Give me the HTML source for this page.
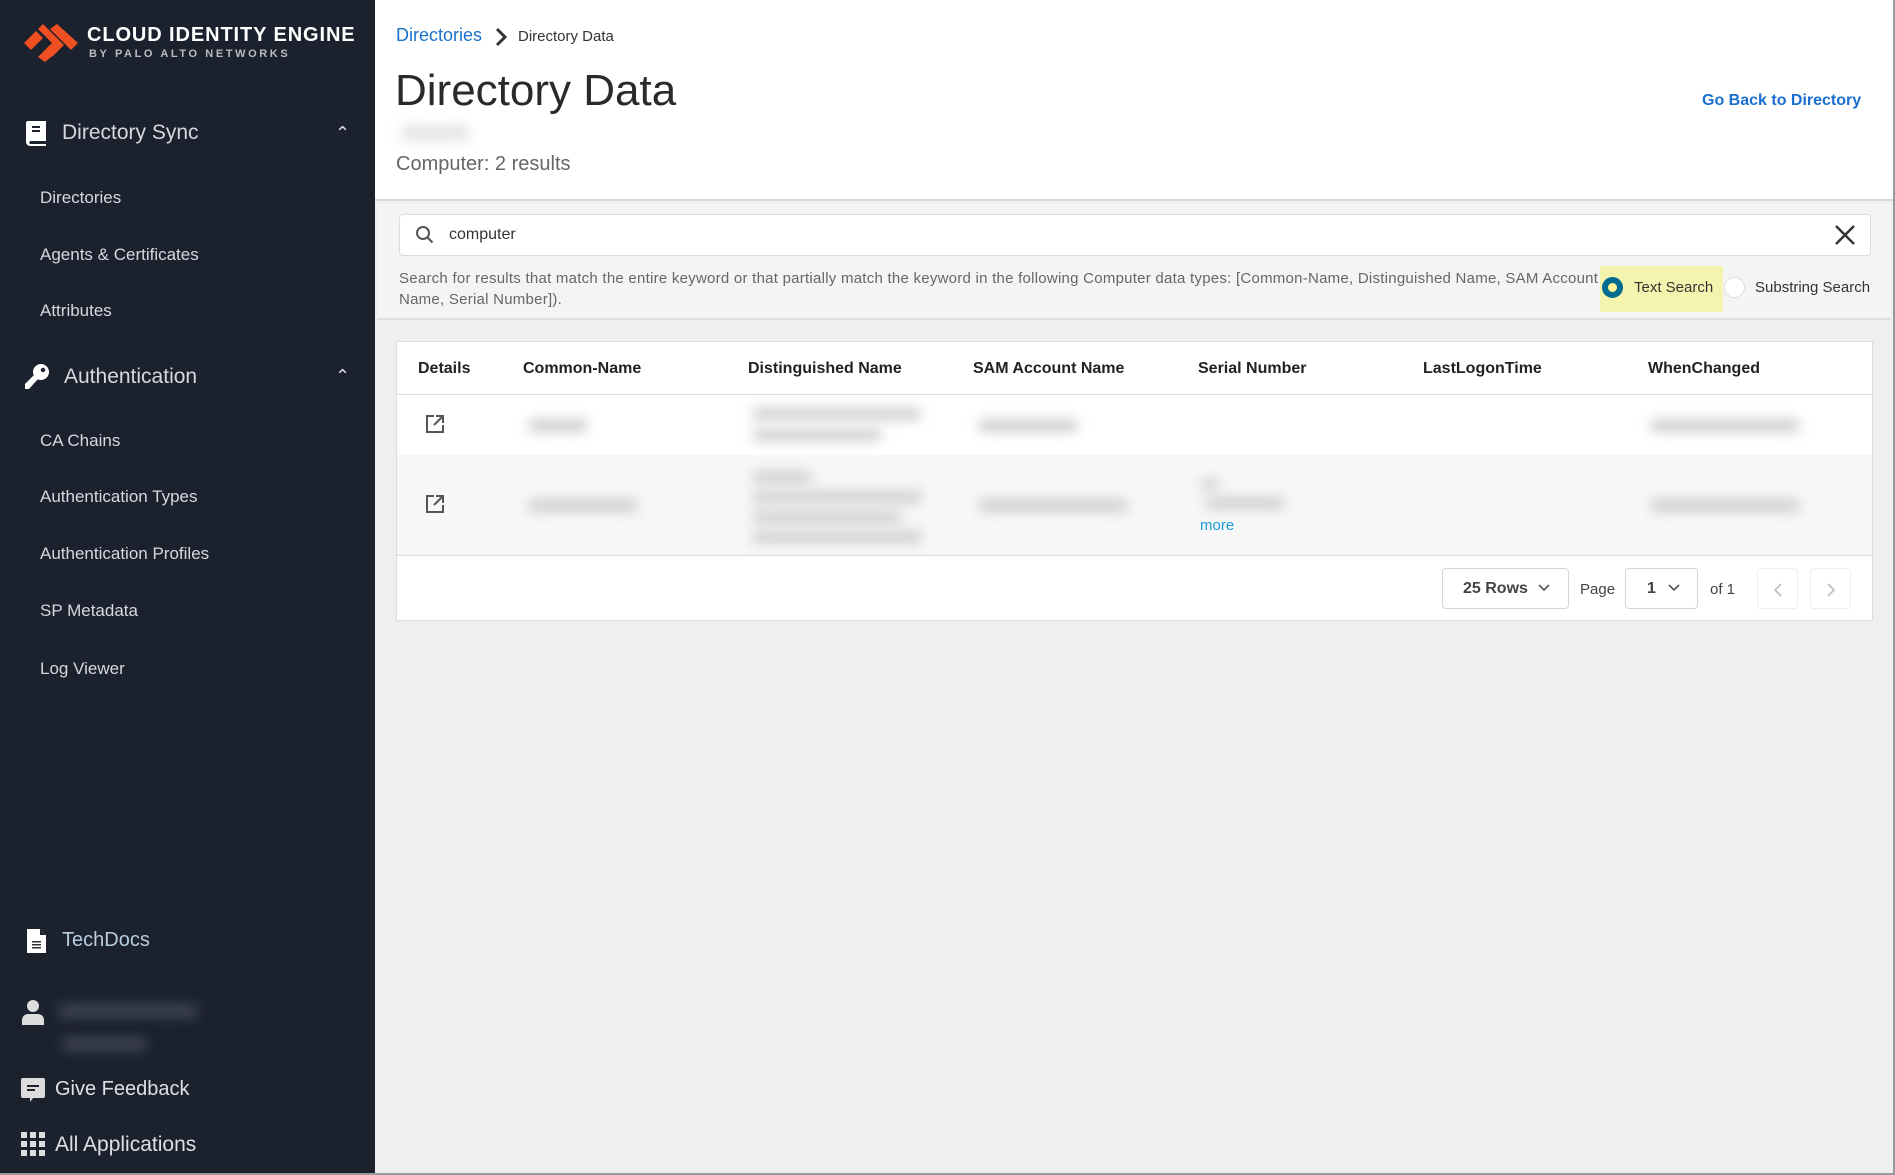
<!DOCTYPE html>
<html><head><meta charset="utf-8"><style>
*{margin:0;padding:0;box-sizing:border-box}
body{width:1895px;height:1175px;position:relative;overflow:hidden;font-family:"Liberation Sans",sans-serif;background:#efefef}
.a{position:absolute;white-space:nowrap}
#sb{position:absolute;left:0;top:0;width:375px;height:1175px;background:#1b212d;color:#d4d9e0}
.sub{font-size:17px;left:40px;color:#d4d9e0}
.sec{font-size:21px;color:#d4d9e0}
.hd{font-size:16px;font-weight:bold;color:#222}
.blur{position:absolute;background:#cfcfcf;filter:blur(6px);border-radius:6px}
.btn{position:absolute;border:1px solid #d5d5d5;border-radius:4px;background:#fff}
</style></head><body>
<div id="sb">
 <svg class="a" style="left:24px;top:24px" width="54" height="38" viewBox="0 0 54 38">
  <g fill="#f04e23"><polygon points="0,19 12,7 19,14 7,26"/><polygon points="14,5 19,0 40,21 28,33 21,26 28,19"/><polygon points="26,5 33,0 54,19 47,26"/><polygon points="14,33 26,21 33,28 21,38"/></g>
 </svg>
 <div class="a" style="left:87px;top:24px;font-size:20px;font-weight:bold;color:#fff;letter-spacing:0.9px">CLOUD IDENTITY ENGINE</div>
 <div class="a" style="left:89px;top:48px;font-size:11px;font-weight:bold;color:#b8bcc3;letter-spacing:2.6px">BY PALO ALTO NETWORKS</div>

 <svg class="a" style="left:26px;top:121px" width="22" height="25" viewBox="0 0 22 25"><path d="M2 0h18v20H4a2 2 0 0 0 0 3h16v2H4a4 4 0 0 1-4-4V2a2 2 0 0 1 2-2z" fill="#fff"/><rect x="6" y="5" width="8" height="2" fill="#1b212d"/><rect x="6" y="9" width="8" height="2" fill="#1b212d"/></svg>
 <div class="a sec" style="left:62px;top:121px">Directory Sync</div>
 <div class="a" style="left:335px;top:123px;font-size:18px;color:#d4d9e0">&#8963;</div>
 <div class="a sub" style="top:188px">Directories</div>
 <div class="a sub" style="top:245px">Agents &amp; Certificates</div>
 <div class="a sub" style="top:301px">Attributes</div>

 <svg class="a" style="left:25px;top:363px" width="25" height="26" viewBox="0 0 25 26"><circle cx="16" cy="9" r="8" fill="#fff"/><circle cx="18" cy="7" r="2.2" fill="#1b212d"/><polygon points="9,12 13,16 4,26 0,26 0,21" fill="#fff"/></svg>
 <div class="a sec" style="left:64px;top:365px">Authentication</div>
 <div class="a" style="left:335px;top:366px;font-size:18px;color:#d4d9e0">&#8963;</div>
 <div class="a sub" style="top:431px">CA Chains</div>
 <div class="a sub" style="top:487px">Authentication Types</div>
 <div class="a sub" style="top:544px">Authentication Profiles</div>
 <div class="a sub" style="top:601px">SP Metadata</div>
 <div class="a sub" style="top:659px">Log Viewer</div>

 <svg class="a" style="left:27px;top:929px" width="19" height="24" viewBox="0 0 19 24"><path d="M0 0h13l6 6v18H0z" fill="#fff"/><path d="M13 0v6h6" fill="#1b212d"/><rect x="5" y="12" width="9" height="1.5" fill="#333"/><rect x="5" y="15" width="9" height="1.5" fill="#333"/><rect x="5" y="18" width="9" height="1.5" fill="#333"/></svg>
 <div class="a" style="left:62px;top:929px;font-size:20px;color:#b9cde0">TechDocs</div>
 <svg class="a" style="left:22px;top:1000px" width="22" height="25" viewBox="0 0 22 25"><circle cx="11" cy="6" r="6" fill="#ddd"/><path d="M0 25v-5a6 6 0 0 1 6-6h10a6 6 0 0 1 6 6v5z" fill="#ddd"/></svg>
 <div class="blur" style="left:58px;top:1004px;width:140px;height:14px;background:#3e4450"></div>
 <div class="blur" style="left:62px;top:1037px;width:85px;height:14px;background:#3e4450"></div>
 <svg class="a" style="left:21px;top:1078px" width="24" height="24" viewBox="0 0 24 24"><path d="M2 0h20a2 2 0 0 1 2 2v16a2 2 0 0 1-2 2H12l-3 4v-4H2a2 2 0 0 1-2-2V2a2 2 0 0 1 2-2z" fill="#ddd"/><rect x="6" y="7" width="12" height="2" fill="#1b212d"/><rect x="6" y="11" width="8" height="2" fill="#1b212d"/></svg>
 <div class="a" style="left:55px;top:1078px;font-size:20px;color:#dde0e4">Give Feedback</div>
 <svg class="a" style="left:21px;top:1132px" width="24" height="24" viewBox="0 0 24 24" fill="#ddd"><rect x="0" y="0" width="6" height="6"/><rect x="9" y="0" width="6" height="6"/><rect x="18" y="0" width="6" height="6"/><rect x="0" y="9" width="6" height="6"/><rect x="9" y="9" width="6" height="6"/><rect x="18" y="9" width="6" height="6"/><rect x="0" y="18" width="6" height="6"/><rect x="9" y="18" width="6" height="6"/><rect x="18" y="18" width="6" height="6"/></svg>
 <div class="a" style="left:55px;top:1133px;font-size:21px;color:#dde0e4">All Applications</div>
</div>

<!-- header -->
<div class="a" style="left:375px;top:0;width:1518px;height:201px;background:#fff;border-bottom:2px solid #d8d8d8"></div>
<div class="a" style="left:396px;top:25px;font-size:18px;color:#1a73c8">Directories</div>
<svg class="a" style="left:494px;top:27px" width="14" height="20" viewBox="0 0 14 20"><path d="M3 2l8 8-8 8" stroke="#333" stroke-width="3" fill="none"/></svg>
<div class="a" style="left:518px;top:28px;font-size:15px;color:#333">Directory Data</div>
<div class="a" style="left:395px;top:66px;font-size:44px;color:#2a2a2a">Directory Data</div>
<div class="blur" style="left:400px;top:126px;width:70px;height:14px;background:#e2e2e2"></div>
<div class="a" style="left:396px;top:153px;font-size:20px;color:#666">Computer: 2 results</div>
<div class="a" style="left:1702px;top:92px;font-size:16px;font-weight:bold;color:#1a6fd1">Go Back to Directory</div>

<!-- search area -->
<div class="a" style="left:377px;top:203px;width:1514px;height:117px;background:#f3f4f4;border-bottom:2px solid #dedede"></div>
<div class="a" style="left:399px;top:214px;width:1472px;height:42px;background:#fff;border:1px solid #dcdcdc;border-radius:4px"></div>
<svg class="a" style="left:415px;top:225px" width="20" height="20" viewBox="0 0 20 20"><circle cx="8" cy="8" r="6" stroke="#555" stroke-width="2" fill="none"/><path d="M12.5 12.5l5 5" stroke="#555" stroke-width="2.2"/></svg>
<div class="a" style="left:449px;top:226px;font-size:16px;color:#333">computer</div>
<svg class="a" style="left:1834px;top:224px" width="22" height="22" viewBox="0 0 22 22"><path d="M2 2l18 18M20 2L2 20" stroke="#333" stroke-width="2.5"/></svg>
<div class="a" style="left:399px;top:268px;font-size:15px;color:#666;line-height:21px;white-space:normal;width:1215px;letter-spacing:0.25px">Search for results that match the entire keyword or that partially match the keyword in the following Computer data types: [Common-Name, Distinguished Name, SAM Account<br>Name, Serial Number]).</div>
<div class="a" style="left:1600px;top:266px;width:123px;height:46px;background:#f4f4af"></div>
<div class="a" style="left:1602px;top:277px;width:21px;height:21px;border-radius:50%;background:#fff59a;border:6px solid #006d8f"></div>
<div class="a" style="left:1634px;top:279px;font-size:15px;color:#333">Text Search</div>
<div class="a" style="left:1724px;top:277px;width:21px;height:21px;border-radius:50%;background:#fff;border:1px solid #ddd"></div>
<div class="a" style="left:1755px;top:279px;font-size:15px;color:#333">Substring Search</div>

<!-- table -->
<div class="a" style="left:396px;top:341px;width:1477px;height:280px;background:#fff;border:1px solid #dcdcdc"></div>
<div class="a" style="left:397px;top:394px;width:1475px;height:1px;background:#dcdcdc"></div>
<div class="a" style="left:397px;top:455px;width:1475px;height:100px;background:#f7f7f7"></div>
<div class="a" style="left:397px;top:555px;width:1475px;height:1px;background:#dcdcdc"></div>
<div class="a hd" style="left:418px;top:360px">Details</div>
<div class="a hd" style="left:523px;top:360px">Common-Name</div>
<div class="a hd" style="left:748px;top:360px">Distinguished Name</div>
<div class="a hd" style="left:973px;top:360px">SAM Account Name</div>
<div class="a hd" style="left:1198px;top:360px">Serial Number</div>
<div class="a hd" style="left:1423px;top:360px">LastLogonTime</div>
<div class="a hd" style="left:1648px;top:360px">WhenChanged</div>
<svg class="a" style="left:425px;top:414px" width="20" height="20" viewBox="0 0 20 20"><path d="M9 2H2v16h16v-7" stroke="#555" stroke-width="2" fill="none"/><path d="M11 2h7v7M18 2l-9 9" stroke="#555" stroke-width="2" fill="none"/></svg>
<svg class="a" style="left:425px;top:494px" width="20" height="20" viewBox="0 0 20 20"><path d="M9 2H2v16h16v-7" stroke="#555" stroke-width="2" fill="none"/><path d="M11 2h7v7M18 2l-9 9" stroke="#555" stroke-width="2" fill="none"/></svg>
<div class="blur" style="left:528px;top:419px;width:60px;height:13px"></div>
<div class="blur" style="left:752px;top:408px;width:170px;height:12px"></div>
<div class="blur" style="left:752px;top:429px;width:130px;height:12px"></div>
<div class="blur" style="left:978px;top:419px;width:100px;height:13px"></div>
<div class="blur" style="left:1650px;top:419px;width:150px;height:13px"></div>
<div class="blur" style="left:528px;top:499px;width:110px;height:13px"></div>
<div class="blur" style="left:752px;top:471px;width:60px;height:12px"></div>
<div class="blur" style="left:752px;top:491px;width:170px;height:12px"></div>
<div class="blur" style="left:752px;top:511px;width:150px;height:12px"></div>
<div class="blur" style="left:752px;top:531px;width:170px;height:12px"></div>
<div class="blur" style="left:978px;top:499px;width:150px;height:13px"></div>
<div class="blur" style="left:1200px;top:479px;width:20px;height:10px"></div>
<div class="blur" style="left:1205px;top:497px;width:80px;height:12px"></div>
<div class="a" style="left:1200px;top:517px;font-size:15px;color:#1a9ad6">more</div>
<div class="blur" style="left:1650px;top:499px;width:150px;height:13px"></div>

<div class="btn" style="left:1442px;top:568px;width:127px;height:41px"></div>
<div class="a" style="left:1463px;top:580px;font-size:16px;font-weight:bold;color:#444">25 Rows</div>
<svg class="a" style="left:1538px;top:584px" width="12" height="8" viewBox="0 0 12 8"><path d="M1 1l5 5 5-5" stroke="#555" stroke-width="1.6" fill="none"/></svg>
<div class="a" style="left:1580px;top:581px;font-size:15px;color:#444">Page</div>
<div class="btn" style="left:1625px;top:568px;width:73px;height:41px"></div>
<div class="a" style="left:1647px;top:580px;font-size:16px;font-weight:bold;color:#444">1</div>
<svg class="a" style="left:1668px;top:584px" width="12" height="8" viewBox="0 0 12 8"><path d="M1 1l5 5 5-5" stroke="#555" stroke-width="1.6" fill="none"/></svg>
<div class="a" style="left:1710px;top:581px;font-size:15px;color:#444">of 1</div>
<div class="btn" style="left:1757px;top:568px;width:41px;height:41px;border-color:#eee"></div>
<svg class="a" style="left:1774px;top:583px" width="8" height="14" viewBox="0 0 8 14"><path d="M7 1L1 7l6 6" stroke="#bbb" stroke-width="1.6" fill="none"/></svg>
<div class="btn" style="left:1810px;top:568px;width:41px;height:41px;border-color:#eee"></div>
<svg class="a" style="left:1827px;top:583px" width="8" height="14" viewBox="0 0 8 14"><path d="M1 1l6 6-6 6" stroke="#bbb" stroke-width="1.6" fill="none"/></svg>

<div class="a" style="left:1893px;top:0;width:2px;height:1175px;background:#9a9a9a"></div>
<div class="a" style="left:0;top:1173px;width:1895px;height:2px;background:#9a9a9a"></div>
</body></html>
